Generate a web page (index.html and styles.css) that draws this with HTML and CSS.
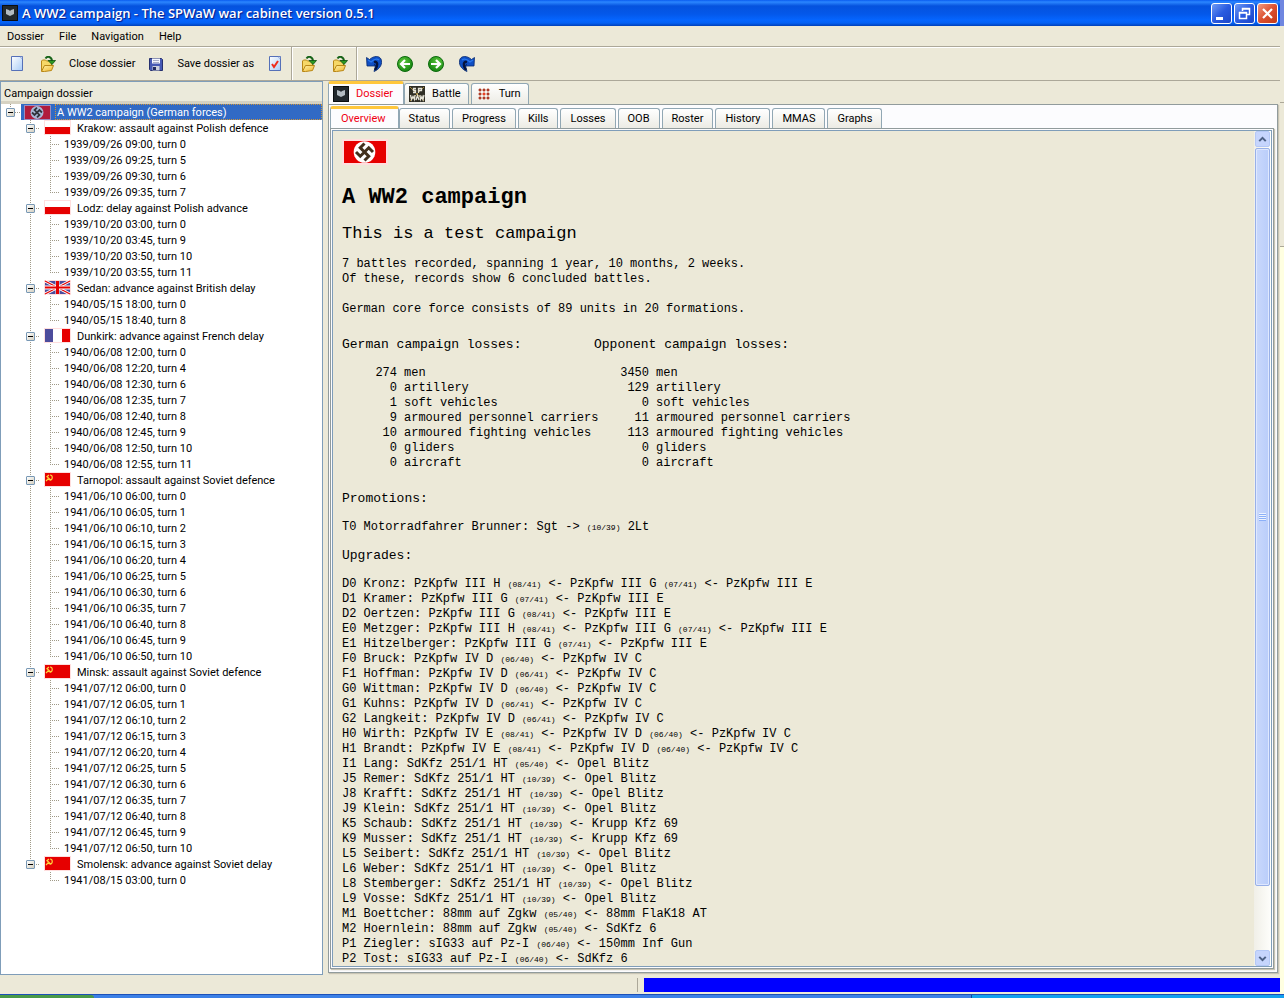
FILE: index.html
```html
<!DOCTYPE html>
<html lang="en">
<head>
<meta charset="utf-8">
<title>A WW2 campaign - The SPWaW war cabinet version 0.5.1</title>
<link rel="stylesheet" href="styles.css">
</head>
<body>
<svg class="defs" width="0" height="0" aria-hidden="true">
  <defs>
    <linearGradient id="gFolder" x1="0" y1="0" x2="1" y2="1"><stop offset="0" stop-color="#fff3a8"/><stop offset="1" stop-color="#f0b52c"/></linearGradient>
    <linearGradient id="gPage" x1="0" y1="0" x2="1" y2="1"><stop offset="0" stop-color="#ffffff"/><stop offset="1" stop-color="#a9ccf8"/></linearGradient>
    <radialGradient id="gGreen" cx=".4" cy=".35" r=".7"><stop offset="0" stop-color="#5cc83c"/><stop offset="1" stop-color="#13820f"/></radialGradient>
    <symbol id="page" viewBox="0 0 16 16"><path d="M2.500 .5h11v14h-11z" fill="url(#gPage)" stroke="#5570b8"/><path d="M11 1h2v2z" fill="#fff" stroke="#8fa6da" stroke-width=".6"/></symbol>
    <symbol id="check" viewBox="0 0 16 16"><path d="M2.500 .5h11v14h-11z" fill="url(#gPage)" stroke="#5570b8"/><path d="M11 1h2v2z" fill="#fff" stroke="#8fa6da" stroke-width=".6"/><path d="M5 8l2 3 4-6" fill="none" stroke="#ee2c1c" stroke-width="2"/></symbol>
    <symbol id="folder" viewBox="0 0 16 16"><path d="M1.500 15V5l1-1h3l1 1h5v4" fill="#f6d867" stroke="#b98716"/><path d="M1.500 15.500l3-6h9l-2 5-7 1z" fill="url(#gFolder)" stroke="#b98716"/><path d="M5.500 2.500C7.500-.5 11.500.5 12 5" fill="none" stroke="#176318" stroke-width="2"/><path d="M8 4.500h7.500L12 8.500z" fill="#2c9a22" stroke="#0d4f13" stroke-width=".8"/></symbol>
    <symbol id="disk" viewBox="0 0 16 16"><path d="M1.500 2.500h12l1 1v11h-12l-1-1z" fill="#4659b4" stroke="#26306f"/><path d="M4 2.500h8v5H4z" fill="#f4f6ff"/><path d="M5 4.500h6M5 6.500h6" stroke="#a8aec8"/><path d="M4.500 10h7v4.500h-7z" fill="#ccd1dc"/><path d="M5 11h3v3H5z" fill="#222b60"/></symbol>
    <symbol id="first" viewBox="0 0 16 16"><path d="M.5 1.500l3 2C8-.5 13-.5 15 3c2 5-1 10-7 12.500 1-4 2-6 0-7.500l2 2H1z" fill="#0f4fc4" stroke="#072a70" stroke-width=".8"/><path d="M8 6c4-1 4 4 1 8" fill="none" stroke="#06143c" stroke-width="2.500"/><path d="M2 4l3 2c4-4 7-3 8-2" fill="none" stroke="#2b79ee" stroke-width="1.300"/></symbol>
    <symbol id="back" viewBox="0 0 16 16"><circle cx="8" cy="8" r="7.500" fill="url(#gGreen)" stroke="#0c6a0e"/><path d="M13 8H4M8 4L4 8l4 4" fill="none" stroke="#fff" stroke-width="2.200"/></symbol>
    <symbol id="shield" viewBox="0 0 16 16"><path d="M0 0h16v16H0z" fill="#22282d"/><path d="M.5.5h15v15H.5z" fill="none" stroke="#0b0d10"/><path d="M4 4l3 1 1 1 1-1 3-1v5l-4 2-4-2z" fill="#b3bbc2"/></symbol>
    <symbol id="spwaw" viewBox="0 0 16 16"><path d="M0 0h16v16H0z" fill="#2e2d24"/><path d="M1 1l14 14M15 1L1 15" stroke="#a0843b"/><path d="M7 2.500H4.500v2h2v2H4M9.500 7V2.500h3v2h-3M1.500 9l1 4.500 1.500-3 1.500 3 .5-4.500M7 14l1.500-4.500L10 14M11 9l.5 4.500 1.500-3 1 3 1-4.500" fill="none" stroke="#e4e2d6" stroke-width="1.300"/></symbol>
    <symbol id="dots" viewBox="0 0 16 16"><path d="M3 3h2v2H3zM7 3h2v2H7zM11 3h2v2h-2zM3 7h2v2H3zM11 7h2v2h-2zM3 11h2v2H3zM7 11h2v2H7zM11 11h2v2h-2z" fill="#9c1408" stroke="#b8503a" stroke-width=".8"/><path d="M7 7h2v2H7z" fill="#ff2810" stroke="#e05030" stroke-width=".8"/></symbol>
    <symbol id="pl" viewBox="0 0 27 15"><path d="M0 0h27v15H0z" fill="#ffdede"/><path d="M1 1h25v7H1z" fill="#fff"/><path d="M1 7h25v7H1z" fill="#e60000"/></symbol>
    <symbol id="fr" viewBox="0 0 27 15"><path d="M0 0h27v15H0z" fill="#ffdede"/><path d="M1 1h8v13H1z" fill="#4c4c9c"/><path d="M9 1h9v13H9z" fill="#fff"/><path d="M18 1h8v13h-8z" fill="#e60000"/></symbol>
    <symbol id="su" viewBox="0 0 27 15"><path d="M0 0h27v15H0z" fill="#ffdede"/><path d="M1 1h25v13H1z" fill="#e60000"/><path d="M6 3c3 0 3 5 0 5l-3-1M3 4.500l4 4M2.500 5L5 3M2 9l2-2" fill="none" stroke="#ffd23c" stroke-width="1.200"/></symbol>
    <symbol id="gb" viewBox="0 0 27 15"><path d="M0 0h27v15H0z" fill="#ffdede"/><path d="M1 1h25v13H1z" fill="#4c4c9c"/><path d="M1 1l25 13M26 1L1 14" stroke="#fff" stroke-width="3"/><path d="M1 1l25 13M26 1L1 14" stroke="#e60000" stroke-width="1.300"/><path d="M13.500 1v13M1 7.500h25" stroke="#fff" stroke-width="4"/><path d="M13.500 1v13" stroke="#e60000" stroke-width="3"/><path d="M1 7.500h25" stroke="#e60000" stroke-width="2"/></symbol>
    <symbol id="de" viewBox="0 0 46 26"><path d="M0 0h46v26H0z" fill="#ffdede"/><path d="M2 2h42v22H2z" fill="#e60000"/><circle cx="22.500" cy="13" r="10.800" fill="#fff"/><path transform="rotate(45 22.500 13)" d="M16.500 7v6h12v6M28.500 7h-6v12h-6" fill="none" stroke="#42301c" stroke-width="3"/></symbol>
    <symbol id="deSel" viewBox="0 0 27 15"><path d="M0 0h27v15H0z" fill="#9a8bbf"/><path d="M1 1h25v13H1z" fill="#b01c3c"/><circle cx="13" cy="7.500" r="6.500" fill="#a9b8d8"/><path transform="rotate(45 13 7.500)" d="M9.500 4v3.500h7V11M16.500 4H13v7H9.500" fill="none" stroke="#30343c" stroke-width="1.800"/></symbol>
  </defs>
</svg>
<div class="desktop">
<main class="window">
  <header class="titlebar">
    <svg class="ico"><use href="#shield"/></svg>
    <h1 class="title">A WW2 campaign - The SPWaW war cabinet version 0.5.1</h1>
    <button class="win" aria-label="Minimize"><svg viewBox="0 0 19 19"><path d="M4 13h7v3H4z" fill="#fff"/></svg></button>
    <button class="win" aria-label="Restore"><svg viewBox="0 0 19 19"><path d="M7.500 7V4.500h7v6H12M7 5h8M4.500 8.500h7v6h-7zM4 9h8" fill="none" stroke="#fff" stroke-width="1.500"/></svg></button>
    <button class="win close" aria-label="Close"><svg viewBox="0 0 19 19"><path d="M5 5l9 9M14 5l-9 9" stroke="#fff" stroke-width="2.200"/></svg></button>
  </header>
  <nav class="menubar"><button>Dossier</button><button>File</button><button>Navigation</button><button>Help</button></nav>
  <div class="toolbar">
    <div class="group">
      <button aria-label="New dossier"><svg class="ico"><use href="#page"/></svg></button>
      <button aria-label="Open dossier"><svg class="ico"><use href="#folder"/></svg></button>
      <button class="text">Close dossier</button>
      <button aria-label="Save dossier"><svg class="ico"><use href="#disk"/></svg></button>
      <button class="text">Save dossier as</button>
      <button aria-label="Check"><svg class="ico"><use href="#check"/></svg></button>
    </div>
    <div class="group">
      <button aria-label="Add battle"><svg class="ico"><use href="#folder"/></svg></button>
      <button aria-label="Add campaign"><svg class="ico"><use href="#folder"/></svg></button>
    </div>
    <div class="group">
      <button aria-label="Previous battle"><svg class="ico"><use href="#first"/></svg></button>
      <button aria-label="Previous turn"><svg class="ico"><use href="#back"/></svg></button>
      <button aria-label="Next turn"><svg class="ico flip"><use href="#back"/></svg></button>
      <button aria-label="Next battle"><svg class="ico flip"><use href="#first"/></svg></button>
    </div>
  </div>
  <div class="work">
    <section class="side">
      <h2 class="side-head">Campaign dossier</h2>
      <div class="tree">
        <div class="row root"><button class="toggle" aria-label="Collapse"></button><div class="selected"><svg class="flag"><use href="#deSel"/></svg><span class="focus">A WW2 campaign (German forces)</span></div></div>
        <ul class="battles">
          <li><div class="row"><button class="toggle" aria-label="Collapse"></button><svg class="flag"><use href="#pl"/></svg>Krakow: assault against Polish defence</div>
            <ul class="turns"><li>1939/09/26 09:00, turn 0</li><li>1939/09/26 09:25, turn 5</li><li>1939/09/26 09:30, turn 6</li><li>1939/09/26 09:35, turn 7</li></ul></li>
          <li><div class="row"><button class="toggle" aria-label="Collapse"></button><svg class="flag"><use href="#pl"/></svg>Lodz: delay against Polish advance</div>
            <ul class="turns"><li>1939/10/20 03:00, turn 0</li><li>1939/10/20 03:45, turn 9</li><li>1939/10/20 03:50, turn 10</li><li>1939/10/20 03:55, turn 11</li></ul></li>
          <li><div class="row"><button class="toggle" aria-label="Collapse"></button><svg class="flag"><use href="#gb"/></svg>Sedan: advance against British delay</div>
            <ul class="turns"><li>1940/05/15 18:00, turn 0</li><li>1940/05/15 18:40, turn 8</li></ul></li>
          <li><div class="row"><button class="toggle" aria-label="Collapse"></button><svg class="flag"><use href="#fr"/></svg>Dunkirk: advance against French delay</div>
            <ul class="turns"><li>1940/06/08 12:00, turn 0</li><li>1940/06/08 12:20, turn 4</li><li>1940/06/08 12:30, turn 6</li><li>1940/06/08 12:35, turn 7</li><li>1940/06/08 12:40, turn 8</li><li>1940/06/08 12:45, turn 9</li><li>1940/06/08 12:50, turn 10</li><li>1940/06/08 12:55, turn 11</li></ul></li>
          <li><div class="row"><button class="toggle" aria-label="Collapse"></button><svg class="flag"><use href="#su"/></svg>Tarnopol: assault against Soviet defence</div>
            <ul class="turns"><li>1941/06/10 06:00, turn 0</li><li>1941/06/10 06:05, turn 1</li><li>1941/06/10 06:10, turn 2</li><li>1941/06/10 06:15, turn 3</li><li>1941/06/10 06:20, turn 4</li><li>1941/06/10 06:25, turn 5</li><li>1941/06/10 06:30, turn 6</li><li>1941/06/10 06:35, turn 7</li><li>1941/06/10 06:40, turn 8</li><li>1941/06/10 06:45, turn 9</li><li>1941/06/10 06:50, turn 10</li></ul></li>
          <li><div class="row"><button class="toggle" aria-label="Collapse"></button><svg class="flag"><use href="#su"/></svg>Minsk: assault against Soviet defence</div>
            <ul class="turns"><li>1941/07/12 06:00, turn 0</li><li>1941/07/12 06:05, turn 1</li><li>1941/07/12 06:10, turn 2</li><li>1941/07/12 06:15, turn 3</li><li>1941/07/12 06:20, turn 4</li><li>1941/07/12 06:25, turn 5</li><li>1941/07/12 06:30, turn 6</li><li>1941/07/12 06:35, turn 7</li><li>1941/07/12 06:40, turn 8</li><li>1941/07/12 06:45, turn 9</li><li>1941/07/12 06:50, turn 10</li></ul></li>
          <li><div class="row"><button class="toggle" aria-label="Collapse"></button><svg class="flag"><use href="#su"/></svg>Smolensk: advance against Soviet delay</div>
            <ul class="turns"><li>1941/08/15 03:00, turn 0</li></ul></li>
        </ul>
      </div>
    </section>
    <section class="detail">
      <div class="tabs main-tabs">
        <button class="tab active"><svg class="ico"><use href="#shield"/></svg>Dossier</button>
        <button class="tab"><svg class="ico"><use href="#spwaw"/></svg>Battle</button>
        <button class="tab"><svg class="ico"><use href="#dots"/></svg>Turn</button>
      </div>
      <div class="pane outer">
        <div class="tabs sub-tabs">
          <button class="tab active">Overview</button><button class="tab">Status</button><button class="tab">Progress</button><button class="tab">Kills</button><button class="tab">Losses</button><button class="tab">OOB</button><button class="tab">Roster</button><button class="tab">History</button><button class="tab">MMAS</button><button class="tab">Graphs</button>
        </div>
        <div class="pane inner">
          <div class="viewer">
            <article class="report">
              <svg class="banner"><use href="#de"/></svg>
              <h2 class="name">A WW2 campaign</h2>
              <h3 class="desc">This is a test campaign</h3>
              <p>7 battles recorded, spanning 1 year, 10 months, 2 weeks.<br>Of these, records show 6 concluded battles.</p>
              <p>German core force consists of 89 units in 20 formations.</p>
              <table class="losses">
                <colgroup><col class="count"><col class="kind"><col class="count"><col class="kind"></colgroup>
                <thead><tr><th colspan="2">German campaign losses:</th><th colspan="2">Opponent campaign losses:</th></tr></thead>
                <tbody>
                <tr><td>274</td><td>men</td><td>3450</td><td>men</td></tr>
                <tr><td>0</td><td>artillery</td><td>129</td><td>artillery</td></tr>
                <tr><td>1</td><td>soft vehicles</td><td>0</td><td>soft vehicles</td></tr>
                <tr><td>9</td><td>armoured personnel carriers</td><td>11</td><td>armoured personnel carriers</td></tr>
                <tr><td>10</td><td>armoured fighting vehicles</td><td>113</td><td>armoured fighting vehicles</td></tr>
                <tr><td>0</td><td>gliders</td><td>0</td><td>gliders</td></tr>
                <tr><td>0</td><td>aircraft</td><td>0</td><td>aircraft</td></tr>
                </tbody>
              </table>
              <h4>Promotions:</h4>
              <p>T0 Motorradfahrer Brunner: Sgt -&gt; <small>(10/39)</small> 2Lt</p>
              <h4>Upgrades:</h4>
              <ul class="upgrades">
                <li>D0 Kronz: PzKpfw III H <small>(08/41)</small> &lt;- PzKpfw III G <small>(07/41)</small> &lt;- PzKpfw III E</li>
                <li>D1 Kramer: PzKpfw III G <small>(07/41)</small> &lt;- PzKpfw III E</li>
                <li>D2 Oertzen: PzKpfw III G <small>(08/41)</small> &lt;- PzKpfw III E</li>
                <li>E0 Metzger: PzKpfw III H <small>(08/41)</small> &lt;- PzKpfw III G <small>(07/41)</small> &lt;- PzKpfw III E</li>
                <li>E1 Hitzelberger: PzKpfw III G <small>(07/41)</small> &lt;- PzKpfw III E</li>
                <li>F0 Bruck: PzKpfw IV D <small>(06/40)</small> &lt;- PzKpfw IV C</li>
                <li>F1 Hoffman: PzKpfw IV D <small>(06/41)</small> &lt;- PzKpfw IV C</li>
                <li>G0 Wittman: PzKpfw IV D <small>(06/40)</small> &lt;- PzKpfw IV C</li>
                <li>G1 Kuhns: PzKpfw IV D <small>(06/41)</small> &lt;- PzKpfw IV C</li>
                <li>G2 Langkeit: PzKpfw IV D <small>(06/41)</small> &lt;- PzKpfw IV C</li>
                <li>H0 Wirth: PzKpfw IV E <small>(08/41)</small> &lt;- PzKpfw IV D <small>(06/40)</small> &lt;- PzKpfw IV C</li>
                <li>H1 Brandt: PzKpfw IV E <small>(08/41)</small> &lt;- PzKpfw IV D <small>(06/40)</small> &lt;- PzKpfw IV C</li>
                <li>I1 Lang: SdKfz 251/1 HT <small>(05/40)</small> &lt;- Opel Blitz</li>
                <li>J5 Remer: SdKfz 251/1 HT <small>(10/39)</small> &lt;- Opel Blitz</li>
                <li>J8 Krafft: SdKfz 251/1 HT <small>(10/39)</small> &lt;- Opel Blitz</li>
                <li>J9 Klein: SdKfz 251/1 HT <small>(10/39)</small> &lt;- Opel Blitz</li>
                <li>K5 Schaub: SdKfz 251/1 HT <small>(10/39)</small> &lt;- Krupp Kfz 69</li>
                <li>K9 Musser: SdKfz 251/1 HT <small>(10/39)</small> &lt;- Krupp Kfz 69</li>
                <li>L5 Seibert: SdKfz 251/1 HT <small>(10/39)</small> &lt;- Opel Blitz</li>
                <li>L6 Weber: SdKfz 251/1 HT <small>(10/39)</small> &lt;- Opel Blitz</li>
                <li>L8 Stemberger: SdKfz 251/1 HT <small>(10/39)</small> &lt;- Opel Blitz</li>
                <li>L9 Vosse: SdKfz 251/1 HT <small>(10/39)</small> &lt;- Opel Blitz</li>
                <li>M1 Boettcher: 88mm auf Zgkw <small>(05/40)</small> &lt;- 88mm FlaK18 AT</li>
                <li>M2 Hoernlein: 88mm auf Zgkw <small>(05/40)</small> &lt;- SdKfz 6</li>
                <li>P1 Ziegler: sIG33 auf Pz-I <small>(06/40)</small> &lt;- 150mm Inf Gun</li>
                <li>P2 Tost: sIG33 auf Pz-I <small>(06/40)</small> &lt;- SdKfz 6</li>
              </ul>
            </article>
            <div class="scrollbar">
              <button class="arrow" aria-label="Scroll up"><svg viewBox="0 0 16 16"><path d="M4 10l4-4 4 4" fill="none" stroke="#4d6185" stroke-width="2.500"/></svg></button>
              <div class="track"><div class="thumb"><span class="grip"></span></div></div>
              <button class="arrow" aria-label="Scroll down"><svg viewBox="0 0 16 16"><path d="M4 6l4 4 4-4" fill="none" stroke="#4d6185" stroke-width="2.500"/></svg></button>
            </div>
          </div>
        </div>
      </div>
    </section>
  </div>
  <footer class="status"><div class="status-text"></div><div class="progress"></div></footer>
</main>
<aside class="behind"><div class="behind-title"></div><div class="behind-bar"></div><div class="behind-tools"></div><div class="behind-page"></div></aside>
</div>
<div class="taskbar"><div class="start"></div><div class="tasks"></div><div class="tray"></div></div>
</body>
</html>
```
FILE: styles.css
```css
* { box-sizing: border-box; }
body {
  margin: 0;
  height: 100vh;
  display: flex;
  flex-direction: column;
  overflow: hidden;
  background: #ece9d8;
  color: #000;
  font: 11px/16px Tahoma, Roboto, sans-serif;
}
button { font: inherit; color: inherit; background: none; border: 0; padding: 0; margin: 0; }
h1, h2, h3, h4, p, ul { margin: 0; padding: 0; font-weight: normal; }
ul { list-style: none; }
svg { display: block; flex: none; }
.defs { position: absolute; }
.ico { width: 16px; height: 16px; }
.flip { transform: scaleX(-1); }

.desktop { flex: 1; min-height: 0; display: grid; grid-template-columns: 1fr 4px; grid-template-rows: minmax(0, 1fr); }
.window { display: flex; flex-direction: column; min-width: 0; min-height: 0; }

.titlebar {
  height: 26px;
  display: flex;
  align-items: center;
  gap: 2px;
  padding: 0 2px;
  background: linear-gradient(#0a5cf0 0, #2b86ff 2px, #0552de 6px, #0458ea 14px, #0565ff 20px, #0461f4 23px, #0140b8 26px);
}
.title { flex: 1; margin-left: 2px; color: #fff; font: 600 13px/18px "Trebuchet MS", "Open Sans", sans-serif; text-shadow: 1px 1px 1px #0a1883; white-space: nowrap; }
.win { width: 21px; height: 21px; border: 1px solid #fff; border-radius: 3px; background: linear-gradient(135deg, #6f9bf5, #2a5be0 50%, #1c46c8); }
.win.close { background: linear-gradient(135deg, #f09a80, #dc5030 50%, #c23a18); }

.menubar { height: 20px; display: flex; align-items: center; gap: 15px; padding: 1px 0 0 7px; }
.toolbar { height: 35px; display: flex; border-top: 1px solid #aca899; border-bottom: 1px solid #aca899; box-shadow: inset 0 1px #fff; }
.group { display: flex; align-items: center; gap: 15px; padding: 0 8px; border-left: 1px solid #fff; border-right: 1px solid #aca899; }
.group:first-child { border-left: 0; padding-left: 9px; }
.group .text { margin: 1px -2px 0; }
.group:last-child { border-right: 0; }

.work { flex: 1; min-height: 0; display: grid; grid-template-columns: 323px minmax(0, 1fr); grid-template-rows: minmax(0, 1fr); gap: 5px; }
.side { border: 1px solid #7f9db9; background: #fff; display: flex; flex-direction: column; min-height: 0; }
.side-head { height: 22px; padding: 4px 3px 0; font-size: 11px; line-height: 16px; background: #ebeadb; border-bottom: 3px solid #d6d2c2; }
.tree { padding-left: 5px; overflow: hidden; line-height: 18px; }
.row { height: 16px; display: flex; align-items: flex-start; white-space: nowrap; }
.root {
  background: repeating-linear-gradient(90deg, #a09a88 0 1px, transparent 1px 2px) 9px 8px / 5px 1px no-repeat,
    repeating-linear-gradient(#a09a88 0 1px, transparent 1px 2px) 4px 0 / 1px 4px no-repeat;
}
.toggle {
  width: 9px;
  height: 9px;
  margin-top: 4px;
  border: 1px solid #7898b5;
  border-radius: 1px;
  background: linear-gradient(#000, #000) center / 5px 1px no-repeat, linear-gradient(135deg, #fff, #d4cfc0);
}
.selected { flex: 1; height: 16px; margin-left: 6px; padding-left: 3px; display: flex; align-items: center; background: #316ac5; color: #fff; }
.focus { flex: 1; height: 16px; margin-left: 4px; padding-left: 1px; line-height: 16px; border: 1px dotted #ce953a; }
.flag { width: 27px; height: 15px; }
.battles { margin-left: 20px; }
.battles > li { background: repeating-linear-gradient(#a09a88 0 1px, transparent 1px 2px) 4px 0 / 1px 100% no-repeat; }
.battles > li:last-child { background-size: 1px 8px; }
.battles .row { background: repeating-linear-gradient(90deg, #a09a88 0 1px, transparent 1px 2px) 10px 8px / 4px 1px no-repeat; }
.battles .flag { margin: 0 6px 0 9px; }
.turns { margin-left: 24px; }
.turns li {
  height: 16px;
  padding-left: 14px;
  background: repeating-linear-gradient(#a09a88 0 1px, transparent 1px 2px) 0 0 / 1px 100% no-repeat,
    repeating-linear-gradient(90deg, #a09a88 0 1px, transparent 1px 2px) 0 8px / 10px 1px no-repeat;
}
.turns li:last-child { background-size: 1px 8px, 10px 1px; }

.detail { display: flex; flex-direction: column; min-height: 0; padding: 0 2px 2px 0; }
.tabs { display: flex; align-items: flex-end; gap: 2px; }
.tab {
  height: 20px;
  padding: 0 9px;
  display: flex;
  align-items: center;
  border: 1px solid #91a7b4;
  border-bottom: 0;
  border-radius: 3px 3px 0 0;
  background: linear-gradient(#fff, #ecebe4);
}
.tab.active { color: #f00014; background: #fcfcfe; border-top: 3px solid #ffc73c; }
.main-tabs { height: 23px; }
.main-tabs .tab { height: 21px; padding: 0 7px 0 4px; gap: 7px; }
.main-tabs .tab.active { height: 23px; margin-right: -2px; padding-right: 10px; }
.sub-tabs { height: 22px; }
.sub-tabs .tab.active { height: 22px; padding: 0 12px 0 10px; margin-right: -2px; }
.pane { flex: 1; min-height: 0; display: flex; flex-direction: column; border: 1px solid #919b9c; background: #fcfcfe; }
.outer { padding: 1px 3px 3px 1px; box-shadow: 1px 1px 1px #c8c4b4; }
.inner { padding: 1px; box-shadow: 1px 1px 1px #c8c4b4; }
.viewer { flex: 1; min-height: 0; display: flex; border: 1px solid #7f9db9; background: #ece9d8; }

.report { flex: 1; min-width: 0; padding: 8px 9px 0; overflow: hidden; font: 12px/15px "Courier New", "Liberation Mono", monospace; white-space: nowrap; }
.banner { width: 46px; height: 26px; }
.name { margin-top: 20px; font-size: 22px; line-height: 26px; font-weight: bold; }
.desc { margin: 13px 0; font-size: 17px; line-height: 20px; }
.report p { margin-bottom: 15px; }
.report small { font-size: 8px; }
.losses { width: 504px; table-layout: fixed; border-collapse: collapse; margin-top: 20px; }
.count { width: 62px; }
.kind { width: 190px; }
.losses th { padding: 0 0 13px; font-size: 13px; line-height: 16px; font-weight: normal; text-align: left; }
.losses td { padding: 0; }
.losses td:nth-child(odd) { padding-right: 7px; text-align: right; }
.report h4 { margin: 13px 0; font-size: 13px; line-height: 16px; }
.report .losses + h4 { margin-top: 20px; }
.report h4 + p { margin-bottom: 13px; }

.scrollbar { width: 17px; display: flex; flex-direction: column; padding: 0 1px; background: linear-gradient(90deg, #f0efe8, #fefefb); }
.arrow { height: 16px; border: 1px solid #b4c8f6; border-radius: 2px; background: #c6d5fd; }
.track { flex: 1; min-height: 0; padding-top: 1px; }
.thumb { height: 92%; display: grid; place-items: center; border: 1px solid #98b0e8; border-radius: 2px; background: linear-gradient(90deg, #c9d8fc, #b9cdfa); box-shadow: inset 0 0 0 1px #dfe8ff; }
.grip { width: 7px; height: 8px; background: repeating-linear-gradient(#eef4fe 0 1px, #8cb0f8 1px 2px); }

.status { height: 19px; display: grid; grid-template-columns: 1fr 1fr; gap: 4px; padding: 3px 0 2px; }
.status-text { border-right: 1px solid #aca899; }
.progress { margin-left: 2px; background: #00f; }

.behind { display: grid; grid-template-rows: 26px 77px 144px 1fr; background: #ffffe1; }
.behind-title { background: #6f86e0; }
.behind-bar, .behind-tools { background: #ece9d8; border-bottom: 1px solid #aca899; }

.taskbar { height: 4px; display: flex; border-top: 1px solid #1c50b8; background: #3c80e6; }
.start { width: 94px; background: #4a9a48; border-radius: 0 3px 0 0; }
.tasks { flex: 1; }
.tray { width: 313px; background: #14a0ee; border-left: 1px solid #0a4a9c; }
```
